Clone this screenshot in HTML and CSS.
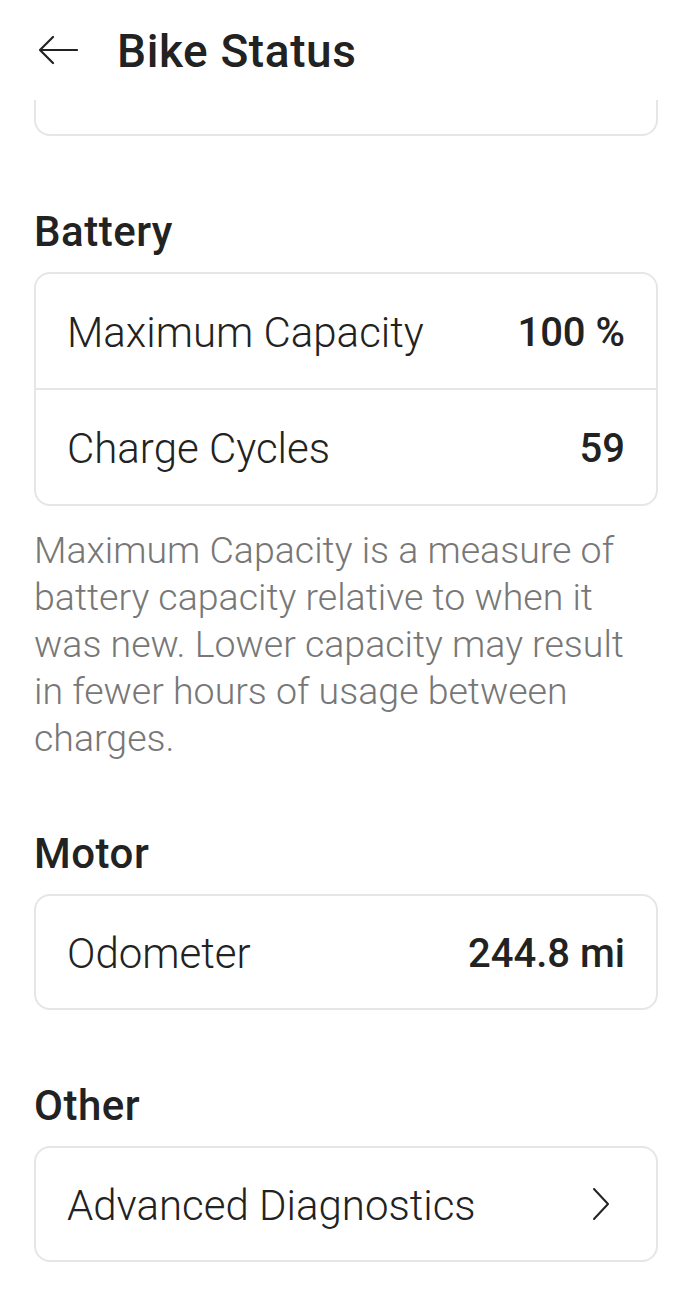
FILE: index.html
```html
<!DOCTYPE html>
<html lang="en">
<head>
    <meta charset="UTF-8">
    <meta name="viewport" content="width=device-width, initial-scale=1.0">
    <title>Bike Status</title>
    <link rel="stylesheet" href="styles.css">
</head>
<body>
    <!-- Header -->
    <header class="top-bar">
        <svg class="back-icon" viewBox="0 0 40 30" width="40" height="30" aria-hidden="true">
            <path d="M39 15H2M15 2L2 15l13 13" fill="none" stroke="#222" stroke-width="2.2" stroke-linecap="round" stroke-linejoin="round"/>
        </svg>
        <h1 class="page-title">Bike Status</h1>
    </header>

    <main class="content">
        <!-- previous card, scrolled off under the header -->
        <div class="card card-cut"></div>

        <section class="group">
            <h2 class="group-title">Battery</h2>
            <div class="card">
                <div class="row">
                    <span class="label">Maximum Capacity</span>
                    <span class="value">100 %</span>
                </div>
                <div class="row">
                    <span class="label">Charge Cycles</span>
                    <span class="value">59</span>
                </div>
            </div>
            <p class="note">Maximum Capacity is a measure of battery capacity relative to when it was new. Lower capacity may result in fewer hours of usage between charges.</p>
        </section>

        <section class="group">
            <h2 class="group-title">Motor</h2>
            <div class="card">
                <div class="row">
                    <span class="label">Odometer</span>
                    <span class="value">244.8 mi</span>
                </div>
            </div>
        </section>

        <section class="group">
            <h2 class="group-title">Other</h2>
            <div class="card">
                <div class="row">
                    <span class="label">Advanced Diagnostics</span>
                    <svg class="chevron" viewBox="0 0 20 34" width="20" height="34" aria-hidden="true">
                        <path d="M3 2l14 15L3 32" fill="none" stroke="#222" stroke-width="2" stroke-linecap="round" stroke-linejoin="round"/>
                    </svg>
                </div>
            </div>
        </section>
    </main>
</body>
</html>
```

FILE: styles.css
```css
body {
    margin: 0;
    background-color: #fff;
    color: #222;
    font-family: Roboto, "Noto Sans", sans-serif;
}
.top-bar {
    display: flex;
    align-items: center;
    height: 100px;
    padding: 0 0 0 38px;
    background-color: #fff;
    box-sizing: border-box;
}
.back-icon {
    display: block;
}
.page-title {
    margin: 2px 0 0 39px;
    font-size: 46px;
    font-weight: 500;
    line-height: 1;
    letter-spacing: 0.6px;
}
.content {
    padding: 0 34px 40px;
}
.card {
    border: 2px solid #e6e6e6;
    border-radius: 16px;
    background-color: #fff;
}
.card-cut {
    height: 34px;
    border-top: none;
    border-top-left-radius: 0;
    border-top-right-radius: 0;
}
.group {
    margin-top: 72px;
}
.group-title {
    margin: 0 0 16px;
    font-size: 42px;
    font-weight: 500;
    line-height: 48px;
    letter-spacing: 0.5px;
}
.row {
    display: flex;
    justify-content: space-between;
    align-items: center;
    height: 114px;
    padding: 0 31px;
}
.row:only-child {
    height: 112px;
}
.row + .row {
    border-top: 2px solid #e6e6e6;
}
.label {
    margin-top: 2px;
    font-size: 42px;
    font-weight: 300;
}
.value {
    margin-top: 2px;
    font-size: 40px;
    font-weight: 500;
}
.chevron {
    display: block;
    margin-right: 14px;
}
.note {
    margin: 21px 0 -4px;
    font-size: 37.5px;
    line-height: 47px;
    color: #777;
    font-weight: 300;
}
```
